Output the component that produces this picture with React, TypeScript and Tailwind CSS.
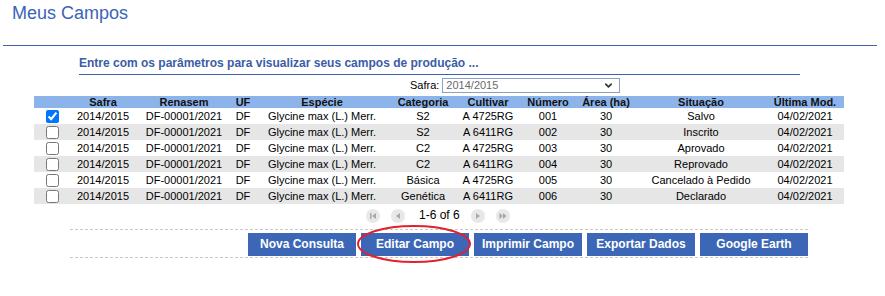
import { ChevronDown } from 'lucide-react'

const cols = [36, 66, 96, 22, 136, 66, 64, 56, 60, 130, 78]

const headers = ['', 'Safra', 'Renasem', 'UF', 'Espécie', 'Categoria', 'Cultivar', 'Número', 'Área (ha)', 'Situação', 'Última Mod.']

const rows = [
  { checked: true, categoria: 'S2', cultivar: 'A 4725RG', numero: '001', situacao: 'Salvo' },
  { checked: false, categoria: 'S2', cultivar: 'A 6411RG', numero: '002', situacao: 'Inscrito' },
  { checked: false, categoria: 'C2', cultivar: 'A 4725RG', numero: '003', situacao: 'Aprovado' },
  { checked: false, categoria: 'C2', cultivar: 'A 6411RG', numero: '004', situacao: 'Reprovado' },
  { checked: false, categoria: 'Básica', cultivar: 'A 4725RG', numero: '005', situacao: 'Cancelado à Pedido' },
  { checked: false, categoria: 'Genética', cultivar: 'A 6411RG', numero: '006', situacao: 'Declarado' },
]

const buttons = ['Nova Consulta', 'Editar Campo', 'Imprimir Campo', 'Exportar Dados', 'Google Earth']

function PagerIcon({ kind }: { kind: 'first' | 'prev' | 'next' | 'last' }) {
  return (
    <span className="flex h-[14px] w-[14px] items-center justify-center rounded-full bg-[#e8e8e8]">
      <svg width="8" height="8" viewBox="0 0 8 8" fill="#a8a8a8">
        {kind === 'first' && (
          <>
            <rect x="1" y="1" width="1.5" height="6" />
            <path d="M7 1 L3 4 L7 7 Z" />
          </>
        )}
        {kind === 'prev' && <path d="M6 1 L2 4 L6 7 Z" />}
        {kind === 'next' && <path d="M2 1 L6 4 L2 7 Z" />}
        {kind === 'last' && (
          <>
            <path d="M0.5 1 L4 4 L0.5 7 Z" />
            <path d="M4 1 L7.5 4 L4 7 Z" />
          </>
        )}
      </svg>
    </span>
  )
}

export default function App() {
  return (
    <div className="h-[296px] w-[885px] bg-white font-['Liberation_Sans',Arial,sans-serif] text-black">
      <h1 className="h-[21px] pl-[12px] pt-[3px] text-[18px] leading-[21px] text-[#3b63b8]">
        Meus Campos
      </h1>

      <div className="ml-[3px] mt-[24px] w-[874px] border-t border-[#3d63b0]" />

      <div className="ml-[79px] mt-[10px] w-[721px] border-b border-[#3d60aa] pb-[4px]">
        <p className="text-[12px] font-bold leading-[14px] text-[#3a5da6]">
          Entre com os parâmetros para visualizar seus campos de produção ...
        </p>
      </div>

      <div className="ml-[410px] mt-[3px] flex h-[15px] items-center gap-[3px] text-[11px]">
        <span className="leading-[15px]">Safra:</span>
        <div className="flex h-[15px] w-[178px] items-center justify-between border border-[#8aa0c4] pl-[3px] pr-[5px] text-[11px] leading-[13px] text-[#6a6a6a]">
          <span>2014/2015</span>
          <ChevronDown size={11} strokeWidth={3.5} className="text-[#333]" />
        </div>
      </div>

      <table className="ml-[34px] mt-[3px] w-[810px] table-fixed border-collapse text-[11px]">
        <colgroup>
          {cols.map((w, i) => (
            <col key={i} style={{ width: w }} />
          ))}
        </colgroup>
        <thead>
          <tr className="h-[12px] bg-[#8db4ea]">
            {headers.map((h, i) => (
              <th key={i} className="p-0 text-center text-[11px] font-bold leading-[12px] text-[#111]">
                {h}
              </th>
            ))}
          </tr>
        </thead>
        <tbody>
          {rows.map((r, i) => (
            <tr key={i} className={`h-[16px] ${i % 2 === 1 ? 'bg-[#e6e6e6]' : 'bg-white'}`}>
              <td className="p-0 leading-[16px]">
                <input
                  type="checkbox"
                  defaultChecked={r.checked}
                  className="m-0 mx-auto block h-[13px] w-[13px]"
                />
              </td>
              <td className="p-0 text-center leading-[16px]">2014/2015</td>
              <td className="p-0 text-center leading-[16px]">DF-00001/2021</td>
              <td className="p-0 text-center leading-[16px]">DF</td>
              <td className="p-0 text-center leading-[16px]">Glycine max (L.) Merr.</td>
              <td className="p-0 text-center leading-[16px]">{r.categoria}</td>
              <td className="p-0 text-center leading-[16px]">{r.cultivar}</td>
              <td className="p-0 text-center leading-[16px]">{r.numero}</td>
              <td className="p-0 text-center leading-[16px]">30</td>
              <td className="p-0 text-center leading-[16px]">{r.situacao}</td>
              <td className="p-0 text-center leading-[16px]">04/02/2021</td>
            </tr>
          ))}
        </tbody>
      </table>

      <div className="ml-[366px] mt-[4px] flex h-[15px] items-center text-[12px]">
        <PagerIcon kind="first" />
        <span className="ml-[11px]"><PagerIcon kind="prev" /></span>
        <span className="ml-[14px] leading-[15px]">1-6 of 6</span>
        <span className="ml-[11px]"><PagerIcon kind="next" /></span>
        <span className="ml-[11px]"><PagerIcon kind="last" /></span>
      </div>

      <div className="ml-[70px] mt-[6px] flex w-[738px] justify-end gap-[5px] border-y border-dashed border-[#c8c8c8] py-[1px]">
        {buttons.map((b) => (
          <div key={b} className="relative">
            <button className="h-[23px] w-[108px] bg-[#3c67b6] text-[12px] font-bold text-white">
              {b}
            </button>
            {b === 'Editar Campo' && (
              <svg
                className="pointer-events-none absolute left-[-8px] top-[-9px]"
                width="124"
                height="42"
                viewBox="0 0 124 42"
              >
                <ellipse cx="61" cy="22" rx="56" ry="18" fill="none" stroke="#e3202b" strokeWidth="2" />
              </svg>
            )}
          </div>
        ))}
      </div>
    </div>
  )
}
